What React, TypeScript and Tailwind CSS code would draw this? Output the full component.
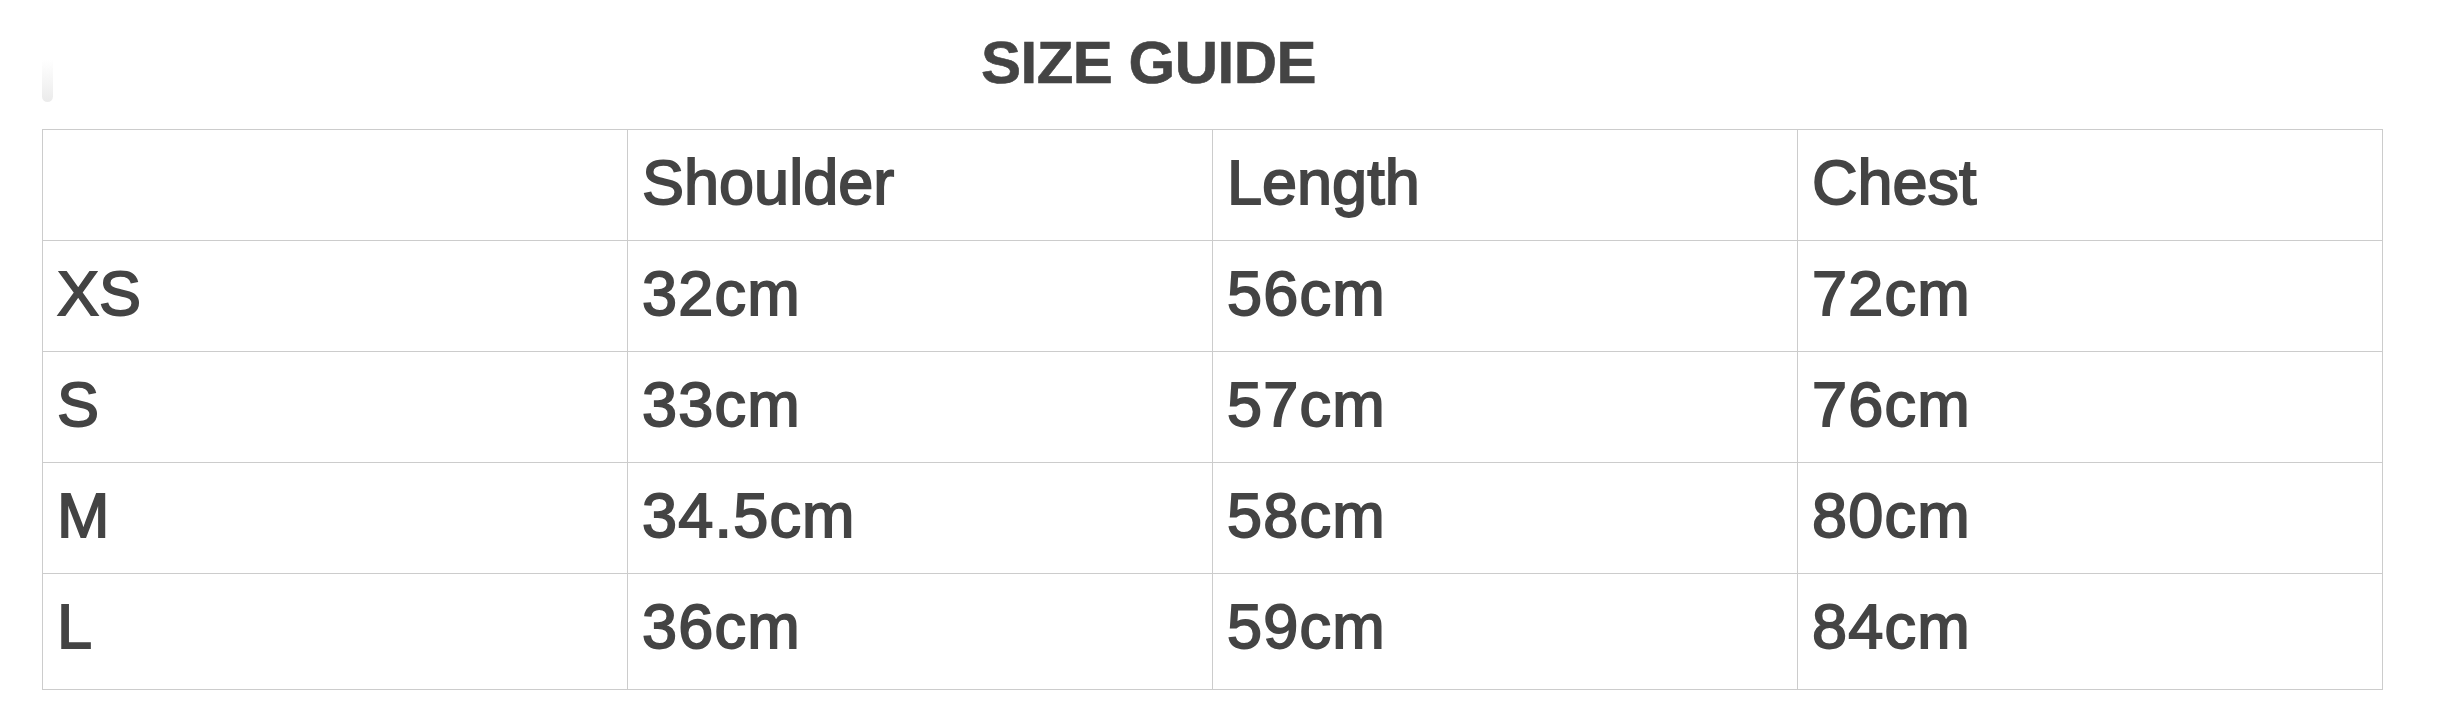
import React from "react";

const header = ["", "Shoulder", "Length", "Chest"];
const rows = [
  ["XS", "32cm", "56cm", "72cm"],
  ["S", "33cm", "57cm", "76cm"],
  ["M", "34.5cm", "58cm", "80cm"],
  ["L", "36cm", "59cm", "84cm"],
];

export default function App() {
  const all = [header, ...rows];
  return (
    <div
      className="relative w-[2448px] h-[712px] bg-white text-[#444444] overflow-hidden"
      style={{ fontFamily: '"Liberation Sans", Arial, Helvetica, sans-serif' }}
    >
      <div className="absolute left-[42px] top-[60px] w-[11px] h-[42px] rounded-b-full bg-gradient-to-b from-white to-[#ebebeb]" />
      <div className="pt-[28px]">
        <h1 className="w-[2297px] text-center text-[60px] leading-[69px] font-bold tracking-[-0.5px] [-webkit-text-stroke:0.6px_#444444]">
          SIZE GUIDE
        </h1>
        <div className="mt-[32px] ml-[42px] w-[2341px] border-t border-l border-[#cccccc]">
          {all.map((r, i) => {
            const last = i === all.length - 1;
            return (
              <div key={i} className={last ? "flex h-[116px]" : "flex h-[111px]"}>
                {r.map((c, j) => {
                  const numeric = i > 0 && j > 0;
                  return (
                    <div
                      key={j}
                      className={
                        (last
                          ? "w-[585px] shrink-0 border-r border-b border-[#cccccc] flex items-center pl-[14px] pb-[11px] text-[63px] leading-[72px] [-webkit-text-stroke:1.8px_#444444]"
                          : "w-[585px] shrink-0 border-r border-b border-[#cccccc] flex items-center pl-[14px] pb-[6px] text-[63px] leading-[72px] [-webkit-text-stroke:1.8px_#444444]") +
                        (numeric ? " tracking-[1.2px]" : "")
                      }
                    >
                      {c}
                    </div>
                  );
                })}
              </div>
            );
          })}
        </div>
      </div>
    </div>
  );
}
